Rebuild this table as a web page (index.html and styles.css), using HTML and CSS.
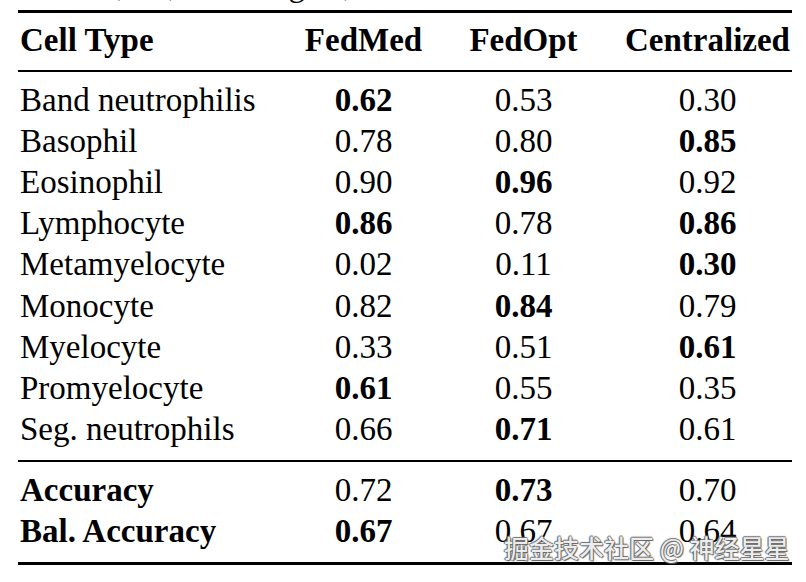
FILE: index.html
```html
<!DOCTYPE html>
<html lang="en">
<head>
<meta charset="utf-8">
<title>Cell Type Results</title>
<link rel="stylesheet" href="styles.css">
</head>
<body>
<div class="caption-clip"><p class="caption">Recalls, F1, and weights, and</p></div>
<div class="results">
  <div class="row head">
    <div class="label">Cell Type</div>
    <div class="num">FedMed</div>
    <div class="num">FedOpt</div>
    <div class="num">Centralized</div>
  </div>
  <div class="group body-group">
    <div class="row"><div class="label">Band neutrophilis</div><div class="num best">0.62</div><div class="num">0.53</div><div class="num">0.30</div></div>
    <div class="row"><div class="label">Basophil</div><div class="num">0.78</div><div class="num">0.80</div><div class="num best">0.85</div></div>
    <div class="row"><div class="label">Eosinophil</div><div class="num">0.90</div><div class="num best">0.96</div><div class="num">0.92</div></div>
    <div class="row"><div class="label">Lymphocyte</div><div class="num best">0.86</div><div class="num">0.78</div><div class="num best">0.86</div></div>
    <div class="row"><div class="label">Metamyelocyte</div><div class="num">0.02</div><div class="num">0.11</div><div class="num best">0.30</div></div>
    <div class="row"><div class="label">Monocyte</div><div class="num">0.82</div><div class="num best">0.84</div><div class="num">0.79</div></div>
    <div class="row"><div class="label">Myelocyte</div><div class="num">0.33</div><div class="num">0.51</div><div class="num best">0.61</div></div>
    <div class="row"><div class="label">Promyelocyte</div><div class="num best">0.61</div><div class="num">0.55</div><div class="num">0.35</div></div>
    <div class="row"><div class="label">Seg. neutrophils</div><div class="num">0.66</div><div class="num best">0.71</div><div class="num">0.61</div></div>
  </div>
  <div class="group foot-group">
    <div class="row"><div class="label bold">Accuracy</div><div class="num">0.72</div><div class="num best">0.73</div><div class="num">0.70</div></div>
    <div class="row"><div class="label bold">Bal. Accuracy</div><div class="num best">0.67</div><div class="num">0.67</div><div class="num">0.64</div></div>
  </div>
</div>
<div class="watermark">掘金技术社区 @ 神经星星</div>
</body>
</html>
```
FILE: styles.css
```css
html, body {
  margin: 0;
  padding: 0;
  background: #ffffff;
}

body {
  width: 806px;
  height: 582px;
  position: relative;
  overflow: hidden;
  font-family: "Liberation Serif", "Times New Roman", serif;
  color: #000000;
}

.caption-clip {
  height: 10px;
  overflow: hidden;
}

.caption {
  margin: -31px 0 0 20px;
  font-size: 33px;
  line-height: 33px;
  white-space: nowrap;
}

.results {
  width: 774px;
  margin-left: 18px;
  border-top: 3px solid #000;
  border-bottom: 3px solid #000;
  font-size: 33px;
}

.row {
  display: grid;
  grid-template-columns: 285px 121px 199px 169px;
  line-height: 41.1px;
  white-space: nowrap;
}

.head {
  padding: 7px 0 9px;
  font-weight: bold;
}

.group {
  border-top: 2px solid #000;
  padding: 8px 0 10px;
}

.label {
  padding-left: 2px;
  text-align: left;
}

.num {
  text-align: center;
}

.best,
.bold {
  font-weight: bold;
}

.watermark {
  position: absolute;
  left: 504px;
  top: 532px;
  font-family: "Noto Sans CJK SC", "Noto Sans", sans-serif;
  font-size: 25px;
  line-height: 30px;
  font-weight: 500;
  color: #ececec;
  white-space: nowrap;
  text-shadow: 0 0 1px #444, 1px 1px 1px #666, -1px 0 1px #777, 0 -1px 1px #777;
}
```
